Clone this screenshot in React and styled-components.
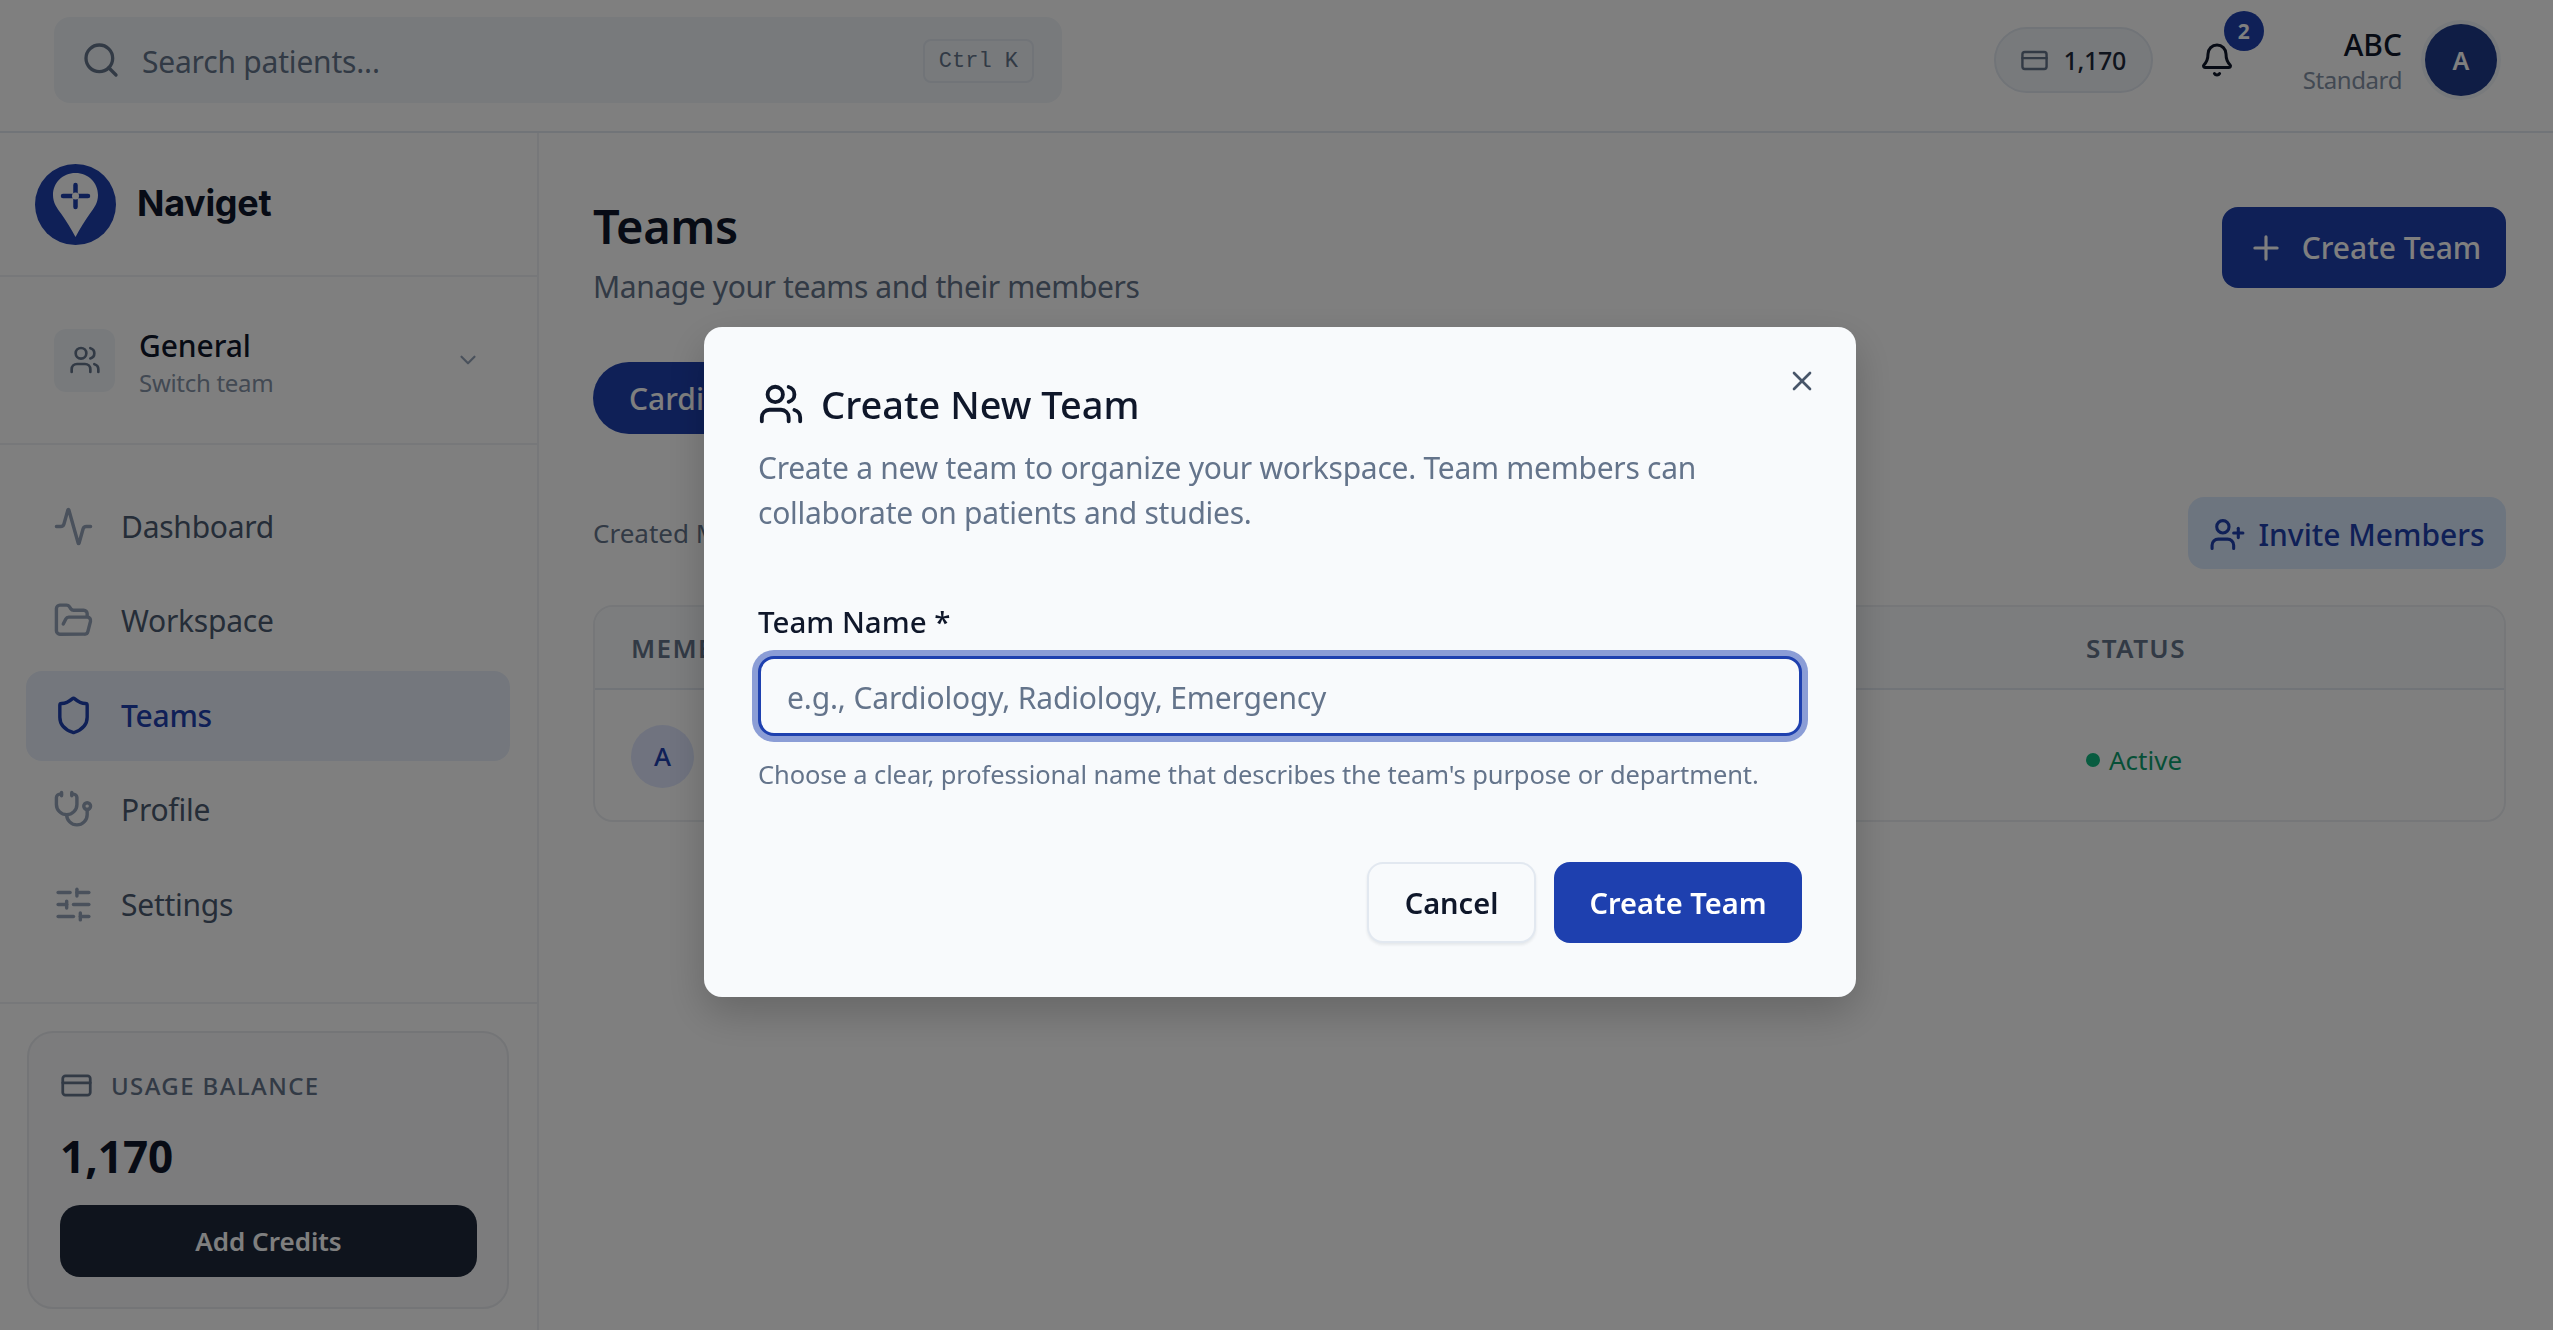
import React from "react";
import styled, { createGlobalStyle } from "styled-components";
import {
  Activity,
  Bell,
  ChevronDown,
  CreditCard,
  FolderOpen,
  Plus,
  Search,
  Shield,
  SlidersHorizontal,
  Stethoscope,
  UserPlus,
  Users,
  X,
} from "lucide-react";

const navItems = [
  { label: "Dashboard", icon: Activity },
  { label: "Workspace", icon: FolderOpen },
  { label: "Teams", icon: Shield, active: true },
  { label: "Profile", icon: Stethoscope },
  { label: "Settings", icon: SlidersHorizontal },
];

const Logo = () => (
  <svg width="81" height="81" viewBox="0 0 81 81">
    <circle cx="40.5" cy="40.5" r="40.5" fill="#1e40af" />
    <path
      d="M40.5 9C27.5 9 18 19 18 31c0 8 4 13 8 18.5 5 7 10 15 14.5 23.5 4.5-8.5 9.5-16.5 14.5-23.5 4-5.5 8-10.5 8-18.5C63 19 53.5 9 40.5 9Z"
      fill="#fff"
    />
    <path d="M40.5 21v22M28 32h25" stroke="#1e40af" strokeWidth="4.5" strokeLinecap="round" />
    <circle cx="40.5" cy="32" r="3.5" fill="#fff" />
  </svg>
);

const App = () => {
  return (
    <Page>
      <GlobalStyle />
      <Header>
        <SearchBox>
          <Search size={40} strokeWidth={2} color="#64748b" />
          <SearchText>Search patients...</SearchText>
          <Kbd>Ctrl K</Kbd>
        </SearchBox>
        <HeaderRight>
          <CreditPill>
            <CreditCard size={29} strokeWidth={2} color="#64748b" />
            <span>1,170</span>
          </CreditPill>
          <BellWrap>
            <Bell size={36} strokeWidth={2} color="#0f172a" />
            <Badge>2</Badge>
          </BellWrap>
          <UserInfo>
            <UserName>ABC</UserName>
            <UserPlan>Standard</UserPlan>
          </UserInfo>
          <UserAvatar>A</UserAvatar>
        </HeaderRight>
      </Header>
      <Body>
        <Sidebar>
          <LogoRow>
            <Logo />
            <LogoText>Naviget</LogoText>
          </LogoRow>
          <TeamRow>
            <TeamIcon>
              <Users size={32} strokeWidth={2} color="#64748b" />
            </TeamIcon>
            <TeamInfo>
              <TeamName>General</TeamName>
              <TeamHint>Switch team</TeamHint>
            </TeamInfo>
            <ChevronDown size={26} strokeWidth={2} color="#94a3b8" />
          </TeamRow>
          <Nav>
            {navItems.map(({ label, icon: Icon, active }) => (
              <NavItem key={label} $active={active}>
                <Icon size={41} strokeWidth={2} color={active ? "#1e40af" : "#94a3b8"} />
                <span>{label}</span>
              </NavItem>
            ))}
          </Nav>
          <UsageSection>
            <UsageCard>
              <UsageLabel>
                <CreditCard size={33} strokeWidth={2} color="#64748b" />
                <span>USAGE BALANCE</span>
              </UsageLabel>
              <UsageValue>1,170</UsageValue>
              <AddCredits>Add Credits</AddCredits>
            </UsageCard>
          </UsageSection>
        </Sidebar>
        <Main>
          <TitleRow>
            <div>
              <Title>Teams</Title>
              <Subtitle>Manage your teams and their members</Subtitle>
            </div>
            <PrimaryButton>
              <Plus size={38} strokeWidth={2} />
              Create Team
            </PrimaryButton>
          </TitleRow>
          <TeamPill>Cardiology</TeamPill>
          <MetaRow>
            <MetaText>Created Mar</MetaText>
            <InviteButton>
              <UserPlus size={37} strokeWidth={2} />
              <span>Invite Members</span>
            </InviteButton>
          </MetaRow>
          <Table>
            <TableHead>
              <span>MEMBER</span>
              <span>STATUS</span>
            </TableHead>
            <TableRow>
              <MemberAvatar>A</MemberAvatar>
              <Status>
                <Dot />
                Active
              </Status>
            </TableRow>
          </Table>
        </Main>
      </Body>
      <Overlay>
        <Dialog>
          <CloseButton>
            <X size={32} strokeWidth={2} color="#475569" />
          </CloseButton>
          <DialogTitle>
            <Users size={46} strokeWidth={2} color="#0f172a" />
            Create New Team
          </DialogTitle>
          <DialogText>
            Create a new team to organize your workspace. Team members can collaborate on patients and studies.
          </DialogText>
          <FieldLabel>Team Name *</FieldLabel>
          <TeamInput placeholder="e.g., Cardiology, Radiology, Emergency" />
          <FieldHint>Choose a clear, professional name that describes the team's purpose or department.</FieldHint>
          <DialogActions>
            <CancelButton>Cancel</CancelButton>
            <SubmitButton>Create Team</SubmitButton>
          </DialogActions>
        </Dialog>
      </Overlay>
    </Page>
  );
};

export default App;

const GlobalStyle = createGlobalStyle`
  html, body {
    margin: 0;
    padding: 0;
    background: #fff;
  }
  * {
    box-sizing: border-box;
  }
  body, button, input {
    font-family: "Noto Sans", "Open Sans", sans-serif;
  }
`;

const Page = styled.div`
  width: 2553px;
  height: 1330px;
  display: flex;
  flex-direction: column;
  overflow: hidden;
  background: #fff;
`;

const Header = styled.header`
  height: 133px;
  flex: none;
  display: flex;
  align-items: flex-start;
  justify-content: space-between;
  padding: 17px 56px 0 54px;
  border-bottom: 2px solid #e2e8f0;
`;

const SearchBox = styled.div`
  width: 1008px;
  height: 86px;
  display: flex;
  align-items: center;
  gap: 21px;
  padding: 0 28px 0 27px;
  background: #f1f5f9;
  border-radius: 16px;
`;

const SearchText = styled.span`
  flex: 1;
  margin-top: 2px;
  font-size: 30px;
  letter-spacing: -0.2px;
  color: #64748b;
`;

const Kbd = styled.kbd`
  height: 44px;
  margin-top: 2px;
  padding: 0 14px;
  display: flex;
  align-items: center;
  font-family: "Liberation Mono", monospace;
  font-size: 22px;
  color: #64748b;
  border: 2px solid #e2e8f0;
  border-radius: 8px;
`;

const HeaderRight = styled.div`
  display: flex;
  align-items: center;
  height: 100px;
  margin-top: -7px;
`;

const CreditPill = styled.div`
  width: 159px;
  height: 66px;
  display: flex;
  align-items: center;
  justify-content: center;
  gap: 14px;
  background: #f1f5f9;
  border: 2px solid #e2e8f0;
  border-radius: 33px;
  font-size: 25px;
  letter-spacing: -0.3px;
  font-weight: 500;
  color: #1e293b;
`;

const BellWrap = styled.div`
  position: relative;
  margin-left: 46px;
  margin-right: 68px;
  display: flex;
`;

const Badge = styled.span`
  position: absolute;
  top: -31px;
  left: 25px;
  width: 40px;
  height: 40px;
  border-radius: 50%;
  background: #1e40af;
  color: #fff;
  font-size: 21px;
  font-weight: 700;
  display: flex;
  align-items: center;
  justify-content: center;
`;

const UserInfo = styled.div`
  display: flex;
  flex-direction: column;
  align-items: flex-end;
  margin: 3px 23px 0 0;
`;

const UserName = styled.span`
  font-size: 30px;
  line-height: 36px;
  font-weight: 500;
  color: #0f172a;
`;

const UserPlan = styled.span`
  font-size: 24px;
  line-height: 34px;
  letter-spacing: -0.4px;
  color: #8492a6;
`;

const UserAvatar = styled.div`
  width: 72px;
  height: 72px;
  border-radius: 50%;
  background: #1e3a8a;
  box-shadow: 0 0 0 4px #f1f5f9;
  color: #fff;
  font-size: 25px;
  font-weight: 600;
  display: flex;
  align-items: center;
  justify-content: center;
`;

const Body = styled.div`
  flex: 1;
  display: flex;
  min-height: 0;
`;

const Sidebar = styled.aside`
  width: 539px;
  flex: none;
  display: flex;
  flex-direction: column;
  border-right: 2px solid #eef1f5;
`;

const LogoRow = styled.div`
  height: 144px;
  flex: none;
  display: flex;
  align-items: center;
  gap: 21px;
  padding: 0 35px;
  border-bottom: 2px solid #eef1f5;
`;

const LogoText = styled.span`
  margin-bottom: 2px;
  font-family: "Inter", sans-serif;
  font-size: 36px;
  font-weight: 700;
  letter-spacing: -0.3px;
  color: #0f172a;
`;

const TeamRow = styled.div`
  height: 168px;
  flex: none;
  display: flex;
  align-items: center;
  padding: 0 56px 0 54px;
  border-bottom: 2px solid #eef1f5;
`;

const TeamIcon = styled.div`
  width: 61px;
  height: 63px;
  border-radius: 12px;
  background: #f1f5f9;
  display: flex;
  align-items: center;
  justify-content: center;
`;

const TeamInfo = styled.div`
  flex: 1;
  display: flex;
  flex-direction: column;
  margin: 7px 0 0 24px;
`;

const TeamName = styled.span`
  font-size: 30px;
  line-height: 38px;
  font-weight: 500;
  letter-spacing: -0.1px;
  color: #0f172a;
`;

const TeamHint = styled.span`
  font-size: 24px;
  line-height: 36px;
  letter-spacing: -0.3px;
  color: #8492a6;
`;

const Nav = styled.nav`
  flex: 1;
  display: flex;
  flex-direction: column;
  gap: 4.5px;
  padding: 37px 27px 0 26px;
`;

const NavItem = styled.div`
  height: 90px;
  flex: none;
  display: flex;
  align-items: center;
  gap: 27px;
  padding: 0 0 2px 27px;
  border-radius: 16px;
  font-size: 30px;
  letter-spacing: -0.25px;
  font-weight: ${(p) => (p.$active ? 500 : 400)};
  color: ${(p) => (p.$active ? "#1e40af" : "#4b5a70")};
  background: ${(p) => (p.$active ? "#e8effb" : "transparent")};
`;

const UsageSection = styled.div`
  flex: none;
  padding: 27px 28px 21px 27px;
  border-top: 2px solid #eef1f5;
`;

const UsageCard = styled.div`
  height: 278px;
  display: flex;
  flex-direction: column;
  padding: 36px 30px 0 31px;
  background: #f8f8fa;
  border: 2px solid #e9ebef;
  border-radius: 26px;
`;

const UsageLabel = styled.div`
  display: flex;
  align-items: center;
  gap: 18px;
  font-size: 24px;
  font-weight: 500;
  letter-spacing: 1.4px;
  color: #64748b;
`;

const UsageValue = styled.div`
  margin-top: 25px;
  font-size: 44px;
  line-height: 58px;
  font-weight: 700;
  color: #0f172a;
`;

const AddCredits = styled.button`
  margin-top: 20px;
  height: 72px;
  border: 0;
  border-radius: 20px;
  background: #1e293b;
  color: #fff;
  font-size: 26px;
  font-weight: 600;
`;

const Main = styled.main`
  flex: 1;
  display: flex;
  flex-direction: column;
  padding: 55px 47px 0 54px;
`;

const TitleRow = styled.div`
  display: flex;
  align-items: flex-start;
  justify-content: space-between;
`;

const Title = styled.h1`
  margin: 0;
  font-size: 47px;
  line-height: 76px;
  font-weight: 600;
  letter-spacing: -0.4px;
  color: #0f172a;
`;

const Subtitle = styled.p`
  margin: 0;
  font-size: 30px;
  line-height: 46px;
  letter-spacing: -0.4px;
  color: #64748b;
`;

const PrimaryButton = styled.button`
  width: 284px;
  height: 81px;
  margin-top: 19px;
  border: 0;
  border-radius: 16px;
  background: #1e40af;
  color: #fff;
  display: flex;
  align-items: center;
  justify-content: center;
  gap: 17px;
  font-size: 30px;
  font-weight: 500;
`;

const TeamPill = styled.div`
  align-self: flex-start;
  width: 240px;
  height: 72px;
  margin-top: 52px;
  padding-left: 36px;
  display: flex;
  align-items: center;
  border-radius: 36px;
  background: #1e40af;
  color: #fff;
  font-size: 30px;
  font-weight: 500;
`;

const MetaRow = styled.div`
  display: flex;
  align-items: center;
  justify-content: space-between;
  margin-top: 63px;
`;

const MetaText = styled.span`
  font-size: 26px;
  color: #64748b;
`;

const InviteButton = styled.button`
  width: 318px;
  height: 72px;
  padding-top: 3px;
  border: 0;
  border-radius: 16px;
  background: #dbeafe;
  color: #1e40af;
  display: flex;
  align-items: center;
  justify-content: center;
  gap: 12px;
  font-size: 30px;
  font-weight: 500;
`;

const Table = styled.div`
  margin-top: 36px;
  border: 2px solid #eceff3;
  border-radius: 20px;
  height: 217px;
`;

const TableHead = styled.div`
  height: 83px;
  display: grid;
  grid-template-columns: 1455px 1fr;
  align-items: center;
  padding-left: 36px;
  background: #f8fafc;
  border-bottom: 2px solid #e2e8f0;
  border-radius: 18px 18px 0 0;
  font-size: 26px;
  font-weight: 600;
  letter-spacing: 1.4px;
  color: #64748b;
`;

const TableRow = styled.div`
  height: 132px;
  display: grid;
  grid-template-columns: 1455px 1fr;
  align-items: center;
  padding-left: 36px;
`;

const MemberAvatar = styled.div`
  width: 63px;
  height: 63px;
  border-radius: 50%;
  background: #e0e7ff;
  color: #1e40af;
  font-size: 26px;
  font-weight: 500;
  display: flex;
  align-items: center;
  justify-content: center;
`;

const Status = styled.div`
  display: flex;
  align-items: center;
  gap: 9px;
  margin-top: 8px;
  font-size: 26px;
  color: #0d9f6e;
`;

const Dot = styled.span`
  width: 14px;
  height: 14px;
  border-radius: 50%;
  background: #10b981;
`;

const Overlay = styled.div`
  position: fixed;
  inset: 0;
  padding: 0 0 6px 7px;
  display: flex;
  align-items: center;
  justify-content: center;
  background: rgba(0, 0, 0, 0.5);
`;

const Dialog = styled.div`
  position: relative;
  width: 1152px;
  height: 670px;
  display: flex;
  flex-direction: column;
  padding: 52px 54px 0;
  background: #f8fafc;
  border-radius: 18px;
  box-shadow: 0 16px 40px rgba(0, 0, 0, 0.2);
`;

const CloseButton = styled.div`
  position: absolute;
  top: 38px;
  right: 38px;
  display: flex;
`;

const DialogTitle = styled.h2`
  margin: 0;
  display: flex;
  align-items: center;
  gap: 17px;
  font-size: 38px;
  line-height: 50px;
  font-weight: 500;
  color: #0f172a;
`;

const DialogText = styled.p`
  margin: 16px 0 0;
  font-size: 30px;
  line-height: 45px;
  letter-spacing: -0.27px;
  color: #64748b;
`;

const FieldLabel = styled.label`
  margin-top: 67px;
  font-size: 29.5px;
  line-height: 40px;
  font-weight: 500;
  color: #0f172a;
`;

const TeamInput = styled.input`
  margin-top: 14px;
  width: 100%;
  height: 80px;
  padding: 2px 26px 0;
  font-size: 30px;
  letter-spacing: -0.15px;
  color: #0f172a;
  background: #f8fafc;
  border: 3px solid #1e40af;
  border-radius: 16px;
  outline: none;
  box-shadow: 0 0 0 6px rgba(30, 64, 175, 0.5);
  &::placeholder {
    color: #64748b;
    opacity: 1;
  }
`;

const FieldHint = styled.p`
  margin: 20px 0 0;
  font-size: 25.5px;
  line-height: 36px;
  letter-spacing: -0.1px;
  color: #64748b;
`;

const DialogActions = styled.div`
  margin-top: 70px;
  display: flex;
  justify-content: flex-end;
  gap: 18px;
`;

const CancelButton = styled.button`
  width: 169px;
  height: 81px;
  background: #f8fafc;
  border: 2px solid #e2e8f0;
  border-radius: 16px;
  box-shadow: 0 2px 3px rgba(15, 23, 42, 0.08);
  color: #0f172a;
  font-size: 29px;
  font-weight: 600;
`;

const SubmitButton = styled.button`
  width: 248px;
  height: 81px;
  border: 0;
  border-radius: 16px;
  background: #1e40af;
  color: #fff;
  font-size: 29px;
  font-weight: 600;
`;
